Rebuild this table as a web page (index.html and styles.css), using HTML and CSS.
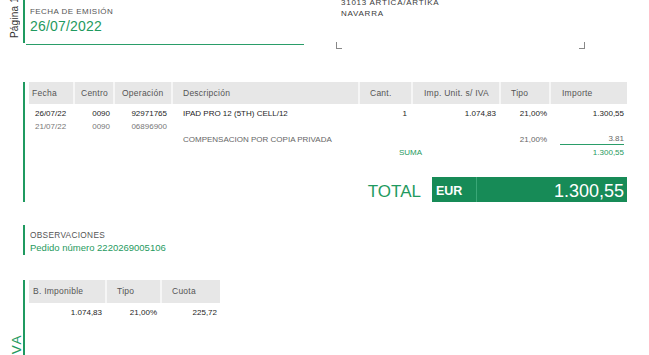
FILE: index.html
```html
<!DOCTYPE html>
<html lang="es">
<head>
<meta charset="utf-8">
<title>Factura</title>
<link rel="stylesheet" href="styles.css">
</head>
<body>
<div class="head">
  <div class="side side-page"><span class="vlabel page-label">Página 1</span></div>
  <div class="fecha">
    <div class="fecha-box">
      <div class="label">FECHA DE EMISIÓN</div>
      <div class="fecha-val">26/07/2022</div>
    </div>
    <div class="fecha-line"></div>
  </div>
  <div class="address">
    <div class="addr-lines">
      <div>31013 ARTICA/ARTIKA</div>
      <div>NAVARRA</div>
    </div>
    <div class="corners">
      <span class="corner corner-l"></span>
      <span class="corner corner-r"></span>
    </div>
  </div>
</div>

<div class="sec sec-table">
  <div class="side"></div>
  <div class="sec-body">
    <div class="lines">
      <div class="th">Fecha</div>
      <div class="th sep p8">Centro</div>
      <div class="th sep p9">Operación</div>
      <div class="th sep p12">Descripción</div>
      <div class="th sep p12">Cant.</div>
      <div class="th sep p13">Imp. Unit. s/ IVA</div>
      <div class="th sep p12">Tipo</div>
      <div class="th sep p13">Importe</div>

      <div class="td strong first l6">26/07/22</div>
      <div class="td strong first r3">0090</div>
      <div class="td strong first r4">92971765</div>
      <div class="td strong first l12">IPAD PRO 12 (5TH) CELL/12</div>
      <div class="td strong first r4">1</div>
      <div class="td strong first r3">1.074,83</div>
      <div class="td strong first r2">21,00%</div>
      <div class="td strong first r3">1.300,55</div>

      <div class="td light l6">21/07/22</div>
      <div class="td light r3">0090</div>
      <div class="td light r4">06896900</div>
      <div class="td span5"></div>

      <div class="td span3"></div>
      <div class="td gray l12">COMPENSACION POR COPIA PRIVADA</div>
      <div class="td span2"></div>
      <div class="td gray r2">21,00%</div>
      <div class="td gray r3"><span class="under">3.81</span></div>

      <div class="td span4"></div>
      <div class="td green suma">SUMA</div>
      <div class="td green r3">1.300,55</div>
    </div>
    <div class="total-row">
      <div class="total-label">TOTAL</div>
      <div class="total-box">
        <div class="cur">EUR</div>
        <div class="amount">1.300,55</div>
      </div>
    </div>
  </div>
</div>

<div class="sec sec-obs">
  <div class="side"></div>
  <div class="sec-body obs-body">
    <div class="label obs-label">OBSERVACIONES</div>
    <div class="obs-val">Pedido número 2220269005106</div>
  </div>
</div>

<div class="sec sec-iva">
  <div class="side side-iva"><span class="vlabel iva-label">IVA</span></div>
  <div class="sec-body iva-body">
    <div class="iva-grid">
      <div class="th">B. Imponible</div>
      <div class="th sep p12">Tipo</div>
      <div class="th sep p12">Cuota</div>
      <div class="td strong first r3">1.074,83</div>
      <div class="td strong first r3">21,00%</div>
      <div class="td strong first r3">225,72</div>
    </div>
  </div>
</div>
</body>
</html>
```

FILE: styles.css
```css
* { box-sizing: border-box; }

body {
  margin: 0;
  width: 649px;
  height: 355px;
  overflow: hidden;
  background: #ffffff;
  color: #333333;
  font-family: "Liberation Sans", Arial, sans-serif;
}

/* side labels */
.side {
  flex: 0 0 23px;
  width: 23px;
}

.vlabel {
  display: block;
  writing-mode: vertical-rl;
  transform: rotate(180deg);
  white-space: nowrap;
}

.side-page {
  padding-left: 9px;
  margin-top: -3px;
}

.page-label {
  font-size: 10px;
  line-height: 12px;
  color: #333333;
  letter-spacing: 0.2px;
}

.side-iva {
  padding-left: 10px;
  padding-top: 54px;
}

.iva-label {
  font-size: 13.5px;
  line-height: 13px;
  color: #1f9a60;
  letter-spacing: 1.6px;
}

/* head */
.head {
  display: flex;
  height: 49px;
}

.fecha {
  flex: 0 0 282px;
}

.fecha-box {
  height: 43px;
  border-left: 2px solid #1f9a60;
  padding-left: 5px;
  padding-top: 7px;
}

.label {
  font-size: 8px;
  line-height: 10px;
  color: #555555;
  letter-spacing: 0.45px;
}

.fecha-val {
  margin-top: 1px;
  font-size: 14px;
  line-height: 16px;
  color: #1f9a60;
  letter-spacing: 0.2px;
}

.fecha-line {
  margin-left: 3px;
  margin-top: 1px;
  width: 278px;
  height: 1px;
  background: #2a9d69;
}

.address {
  margin-left: 31px;
}

.addr-lines {
  margin-top: -3px;
  padding-left: 5px;
  font-size: 8px;
  line-height: 11px;
  color: #3a3a3a;
  letter-spacing: 0.75px;
}

.corners {
  margin-top: 23px;
  width: 249px;
  display: flex;
  justify-content: space-between;
}

.corner {
  display: block;
  width: 6px;
  height: 7px;
  border-bottom: 1px solid #888888;
}

.corner-l { border-left: 1px solid #888888; }
.corner-r { border-right: 1px solid #888888; }

/* sections */
.sec {
  display: flex;
}

.sec-body {
  border-left: 2px solid #1f9a60;
  padding-left: 4px;
}

.sec-table {
  margin-top: 33px;
}

.lines {
  width: 598px;
  display: grid;
  grid-template-columns: 44px 40px 58px 187px 53px 88px 50px 78px;
  grid-auto-rows: 13px;
  grid-template-rows: 22px 16px;
}

.th {
  background: #e7e7e7;
  font-size: 8.5px;
  line-height: 22px;
  color: #555555;
  padding-left: 3px;
  white-space: nowrap;
  letter-spacing: 0.25px;
}

.th.sep { border-left: 2px solid #f6f6f6; }
.th.p8 { padding-left: 6px; }
.th.p9 { padding-left: 7px; }
.th.p12 { padding-left: 10px; }
.th.p13 { padding-left: 11px; }

.td {
  font-size: 8px;
  line-height: 13px;
  white-space: nowrap;
}

.td.first { padding-top: 3px; }

.strong { color: #1e1e1e; }
.light { color: #777777; }
.gray { color: #666666; }
.green { color: #1f9a60; }

.l6 { padding-left: 6px; }
.l12 { padding-left: 12px; }
.r2 { text-align: right; padding-right: 2px; }
.r3 { text-align: right; padding-right: 3px; }
.r4 { text-align: right; padding-right: 4px; }

.span2 { grid-column: span 2; }
.span3 { grid-column: span 3; }
.span4 { grid-column: span 4; }
.span5 { grid-column: span 5; }

.suma {
  grid-column: span 3;
  padding-left: 41px;
}

.under {
  display: block;
  margin-left: 11px;
  padding-top: 1px;
  line-height: 10px;
  border-bottom: 1px solid #2a9d69;
}

/* total */
.total-row {
  margin-top: 18px;
  display: flex;
  justify-content: flex-end;
  align-items: flex-start;
  height: 25px;
}

.total-label {
  margin-top: 5px;
  margin-right: 11px;
  font-size: 17px;
  line-height: 20px;
  color: #1f9a60;
}

.total-box {
  width: 195px;
  height: 25px;
  display: flex;
  background: #178b57;
  color: #ffffff;
}

.cur {
  flex: 0 0 45px;
  border-right: 1px solid #3aa777;
  padding-left: 4px;
  padding-top: 4px;
  font-size: 12.5px;
  line-height: 21px;
  font-weight: bold;
}

.amount {
  flex: 1;
  text-align: right;
  padding-right: 3px;
  padding-top: 3px;
  font-size: 18px;
  line-height: 22px;
}

/* observaciones */
.sec-obs {
  margin-top: 23px;
}

.obs-body {
  padding-left: 5px;
  padding-top: 5px;
  height: 30px;
}

.obs-label {
  font-size: 8.3px;
  letter-spacing: 0.3px;
}

.obs-val {
  margin-top: 2px;
  font-size: 9.5px;
  line-height: 12px;
  color: #1f9a60;
}

/* iva */
.sec-iva {
  margin-top: 25px;
}

.iva-body {
  height: 90px;
}

.iva-grid {
  width: 191px;
  display: grid;
  grid-template-columns: 76px 55px 60px;
  grid-template-rows: 23px 16px;
}

.iva-grid .th {
  line-height: 23px;
  padding-left: 4px;
}

.iva-grid .th.p12 { padding-left: 10px; }
```
